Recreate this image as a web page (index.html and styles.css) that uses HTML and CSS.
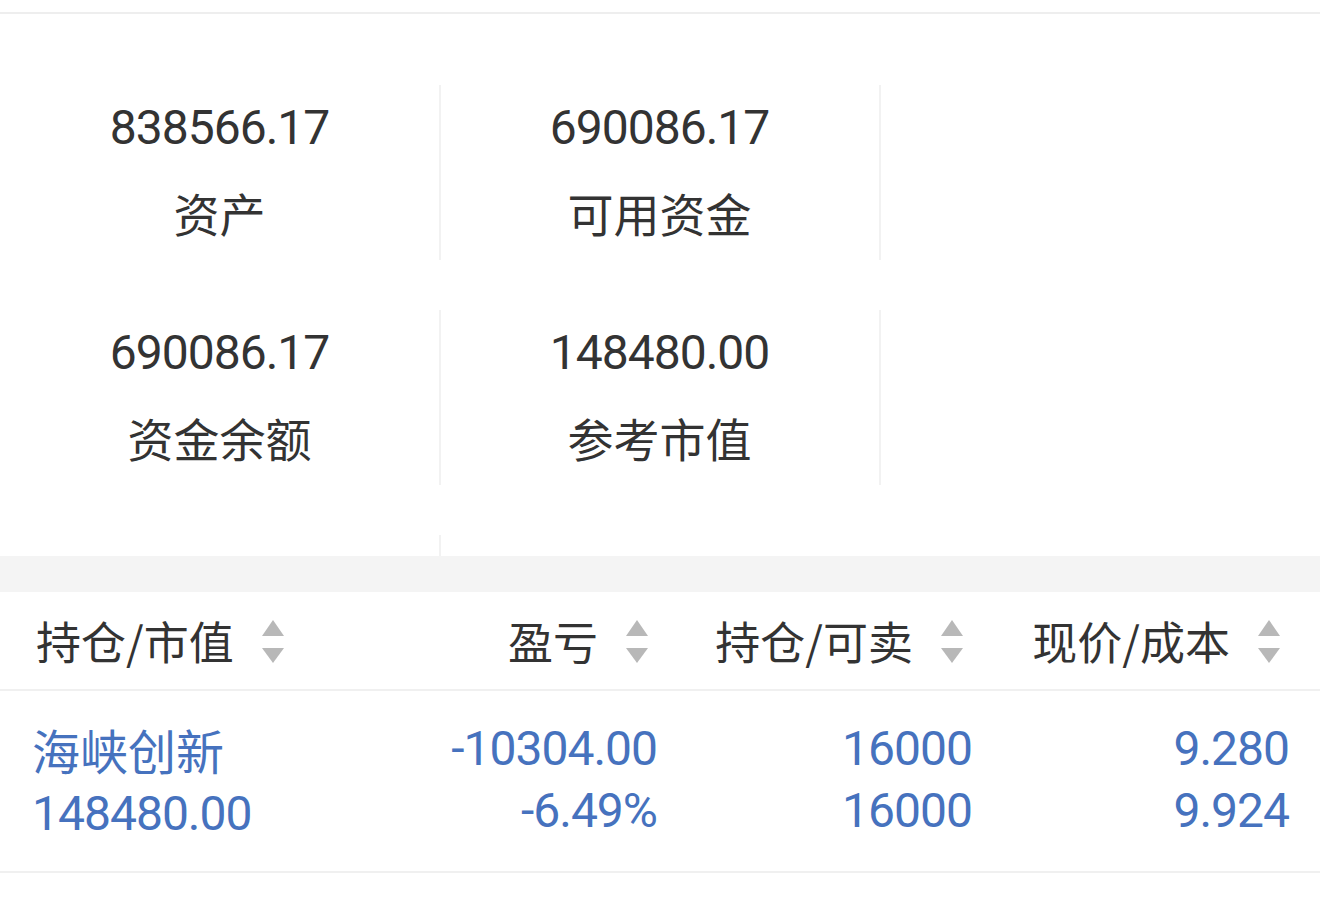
FILE: index.html
```html
<!DOCTYPE html>
<html lang="zh-CN">
<head>
<meta charset="utf-8">
<title>资产</title>
<link rel="stylesheet" href="styles.css">
</head>
<body>
<div class="page">
  <section class="summary">
    <div class="cell">
      <div class="num">838566.17</div>
      <div class="label">资产</div>
    </div>
    <div class="cell">
      <div class="num">690086.17</div>
      <div class="label">可用资金</div>
    </div>
    <div class="cell cell-empty"></div>
    <div class="cell">
      <div class="num">690086.17</div>
      <div class="label">资金余额</div>
    </div>
    <div class="cell">
      <div class="num">148480.00</div>
      <div class="label">参考市值</div>
    </div>
    <div class="cell cell-empty"></div>
    <div class="cell cell-stub"></div>
  </section>
  <div class="band"></div>
  <section class="table">
    <div class="thead">
      <div class="th th-left"><span>持仓/市值</span><svg class="sort" viewBox="0 0 22 44" width="22" height="44"><polygon points="11,0 22,16 0,16"/><polygon points="0,28 22,28 11,43"/></svg></div>
      <div class="th"><span>盈亏</span><svg class="sort" viewBox="0 0 22 44" width="22" height="44"><polygon points="11,0 22,16 0,16"/><polygon points="0,28 22,28 11,43"/></svg></div>
      <div class="th"><span>持仓/可卖</span><svg class="sort" viewBox="0 0 22 44" width="22" height="44"><polygon points="11,0 22,16 0,16"/><polygon points="0,28 22,28 11,43"/></svg></div>
      <div class="th"><span>现价/成本</span><svg class="sort" viewBox="0 0 22 44" width="22" height="44"><polygon points="11,0 22,16 0,16"/><polygon points="0,28 22,28 11,43"/></svg></div>
    </div>
    <div class="trow">
      <div class="td td-left">
        <div class="name">海峡创新</div>
        <div class="val">148480.00</div>
      </div>
      <div class="td">
        <div class="val">-10304.00</div>
        <div class="val">-6.49%</div>
      </div>
      <div class="td">
        <div class="val">16000</div>
        <div class="val">16000</div>
      </div>
      <div class="td">
        <div class="val">9.280</div>
        <div class="val">9.924</div>
      </div>
    </div>
  </section>
</div>
</body>
</html>
```
FILE: styles.css
```css
html, body {
  margin: 0;
  padding: 0;
  background: #ffffff;
}
body {
  font-family: Roboto, "Noto Sans CJK SC", sans-serif;
  color: #333333;
}
.page {
  padding-top: 12px;
}
.summary {
  border-top: 2px solid #eeeeee;
  display: grid;
  grid-template-columns: 440px 440px 440px;
  row-gap: 50px;
  padding-top: 71px;
}
.cell {
  height: 175px;
  border-right: 2px solid #f2f2f2;
  display: flex;
  flex-direction: column;
  align-items: center;
  justify-content: center;
  gap: 31px;
  box-sizing: border-box;
  padding-bottom: 8px;
  margin-right: -1px;
}
.cell-empty {
  border-right: none;
}
.cell-stub {
  height: 21px;
  padding-bottom: 0;
}
.num {
  font-family: Roboto, sans-serif;
  font-size: 48px;
  font-weight: 400;
  letter-spacing: -1px;
  line-height: 56px;
  color: #333333;
}
.label {
  font-family: "Noto Sans CJK SC", sans-serif;
  font-size: 46px;
  line-height: 50px;
  color: #333333;
}
.band {
  height: 36px;
  background: #f4f4f4;
}
.thead, .trow {
  display: grid;
  grid-template-columns: 368px 257px 315px 317px;
  padding: 0 31px 0 32px;
}
.thead {
  height: 97px;
  border-bottom: 2px solid #f0f0f0;
}
.th {
  display: flex;
  align-items: center;
  justify-content: flex-end;
  padding-right: 9px;
  font-family: "Noto Sans CJK SC", sans-serif;
  font-size: 45px;
  color: #333333;
}
.th-left {
  justify-content: flex-start;
  padding-left: 4px;
  padding-right: 0;
}
.sort {
  margin-left: 28px;
  margin-top: 3px;
  fill: #b8b8b8;
  flex: none;
}
.trow {
  height: 180px;
  border-bottom: 2px solid #f0f0f0;
}
.td {
  display: flex;
  flex-direction: column;
  justify-content: center;
  align-items: flex-end;
  padding-bottom: 3px;
  color: #4672be;
}
.td-left {
  align-items: flex-start;
}
.name {
  font-family: "Noto Sans CJK SC", sans-serif;
  font-size: 48px;
  line-height: 68px;
}
.val {
  font-family: Roboto, sans-serif;
  font-size: 48px;
  font-weight: 400;
  letter-spacing: -1px;
  line-height: 62px;
}
```
